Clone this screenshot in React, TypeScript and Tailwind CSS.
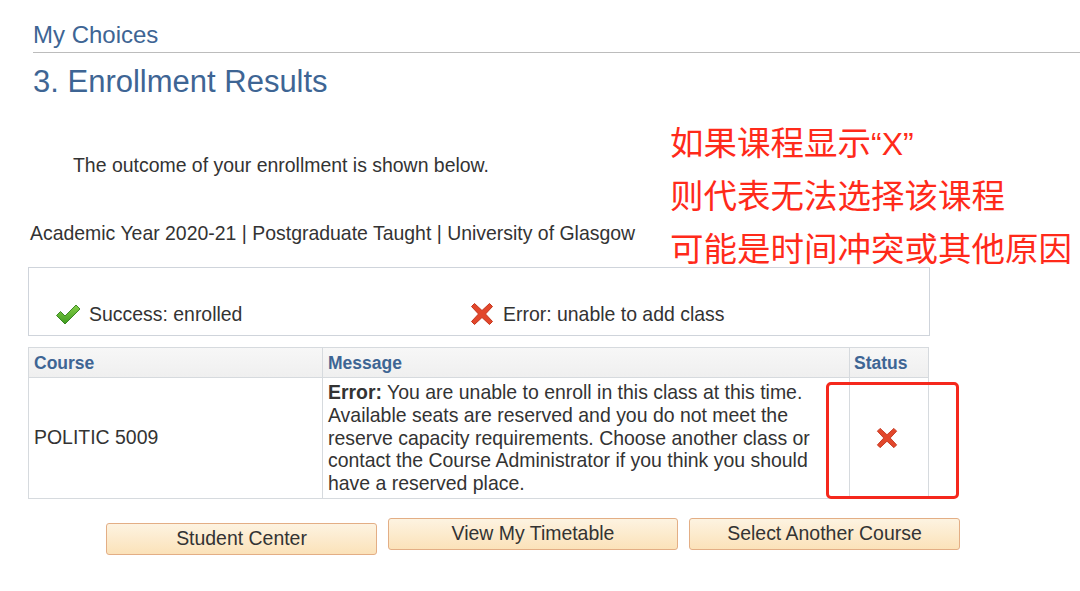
import React from "react";

const CheckIcon = () => (
  <svg width="26" height="24" viewBox="0 0 26 24" className="shrink-0">
    <defs>
      <linearGradient id="cg" x1="0" y1="0" x2="0" y2="1">
        <stop offset="0" stopColor="#86d04a" />
        <stop offset="1" stopColor="#3f9c1e" />
      </linearGradient>
    </defs>
    <polygon
      points="1.5,13.5 5.5,9.5 10,14 21,3 25,7 10,22"
      fill="url(#cg)"
      stroke="#2f7d18"
      strokeWidth="0.9"
      strokeLinejoin="round"
    />
  </svg>
);

const XIcon = ({ size = 24 }: { size?: number }) => (
  <svg width={size} height={size} viewBox="0 0 24 24" className="shrink-0">
    <polygon
      points="4.5,1.5 12,8.5 19.5,1.5 22.5,4.5 15.5,12 22.5,19.5 19.5,22.5 12,15.5 4.5,22.5 1.5,19.5 8.5,12 1.5,4.5"
      fill="#e2472b"
      stroke="#c4341c"
      strokeWidth="1"
      strokeLinejoin="round"
    />
  </svg>
);

const Btn = ({ label, w, extra }: { label: string; w: string; extra?: string }) => (
  <div
    className={`${w} ${extra ?? ""} h-[32px] flex items-center justify-center rounded-[3px] border border-[#e3ae85] bg-gradient-to-b from-[#fdf3e1] to-[#fbe2b9] text-[19.45px] leading-[23px] text-[#333]`}
  >
    {label}
  </div>
);

export default function App() {
  return (
    <div className="relative w-[1080px] h-[591px] overflow-hidden bg-white font-['Liberation_Sans',Arial,sans-serif] text-[#333]">
      <div className="pl-[33px] pt-[21px] text-[24px] leading-[28px] text-[#3e6594]">My Choices</div>
      <div className="ml-[33px] mt-[3px] h-px bg-[#bcbcbc]" />
      <div className="pl-[33px] mt-[11px] text-[31px] leading-[36px] text-[#3e6594]">3. Enrollment Results</div>

      <p className="pl-[73px] mt-[54px] text-[19.45px] leading-[23px]">The outcome of your enrollment is shown below.</p>
      <p className="pl-[30px] mt-[45px] text-[19.45px] leading-[23px]">
        Academic Year 2020-21 | Postgraduate Taught | University of Glasgow
      </p>

      <div className="ml-[28px] mt-[22px] w-[902px] h-[69px] border border-[#cfd4db] pl-[26px] pt-[34px] flex items-start text-[19.45px] leading-[23px]">
        <div className="w-[415px] flex items-center gap-[8px]">
          <CheckIcon />
          <span>Success: enrolled</span>
        </div>
        <div className="flex items-center gap-[9px]">
          <XIcon />
          <span>Error: unable to add class</span>
        </div>
      </div>

      <table className="ml-[28px] mt-[11px] w-[900px] border-collapse border border-[#cfd4db] table-fixed">
        <colgroup>
          <col className="w-[294px]" />
          <col className="w-[527px]" />
          <col className="w-[79px]" />
        </colgroup>
        <thead>
          <tr className="h-[30px] bg-gradient-to-b from-[#f7f7f7] to-[#efefef]">
            <th className="border border-[#d6dade] px-[5px] text-left align-middle text-[17.5px] leading-[20px] font-bold text-[#3e6594]">Course</th>
            <th className="border border-[#d6dade] px-[5px] text-left align-middle text-[17.5px] leading-[20px] font-bold text-[#3e6594]">Message</th>
            <th className="border border-[#d6dade] px-[4px] text-left align-middle text-[17.5px] leading-[20px] font-bold text-[#3e6594]">Status</th>
          </tr>
        </thead>
        <tbody>
          <tr>
            <td className="border border-[#d6dade] px-[5px] align-middle text-[19.45px] leading-[23px]">POLITIC 5009</td>
            <td className="border border-[#d6dade] pl-[5px] pr-[2px] pt-[3px] pb-[3px] align-top text-[19.45px] leading-[22.75px] whitespace-nowrap">
              <b>Error:</b> You are unable to enroll in this class at this time.
              <br />
              Available seats are reserved and you do not meet the
              <br />
              reserve capacity requirements. Choose another class or
              <br />
              contact the Course Administrator if you think you should
              <br />
              have a reserved place.
            </td>
            <td className="border border-[#d6dade] align-middle">
              <div className="flex justify-center pr-[4px]">
                <XIcon size={22} />
              </div>
            </td>
          </tr>
        </tbody>
      </table>

      <div className="ml-[106px] mt-[19px] flex items-start gap-[11px]">
        <Btn label="Student Center" w="w-[271px]" extra="mt-[5px]" />
        <Btn label="View My Timetable" w="w-[290px]" />
        <Btn label="Select Another Course" w="w-[271px]" />
      </div>

      {/* annotation overlay */}
      <div className="absolute left-[826px] top-[382px] w-[133px] h-[117px] border-[3px] border-[#f5281c] rounded-[5px]" />
      <div className="absolute left-[670px] top-[114px] text-[33.5px] leading-[53px] text-[#ff2a1a] font-['Noto_Sans_CJK_SC','Noto_Sans',sans-serif] whitespace-nowrap">
        <div className="h-[53px]">
          如果课程显示<span className="font-['Liberation_Sans',Arial,sans-serif] text-[32px] leading-none">“X”</span>
        </div>
        <div className="h-[53px]">则代表无法选择该课程</div>
        <div className="h-[53px]">可能是时间冲突或其他原因</div>
      </div>
    </div>
  );
}
